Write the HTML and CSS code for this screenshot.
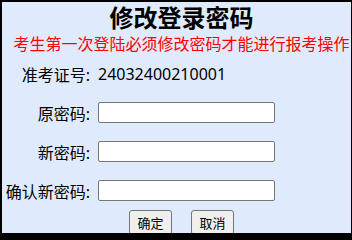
FILE: index.html
```html
<!DOCTYPE html>
<html lang="zh-CN">
<head>
<meta charset="utf-8">
<title>修改登录密码</title>
<link rel="stylesheet" href="styles.css">
</head>
<body>
<div class="frame">
  <div class="content">
    <h1 class="title">修改登录密码</h1>
    <p class="notice">考生第一次登陆必须修改密码才能进行报考操作</p>
    <div class="form">
      <div class="label">准考证号:</div>
      <div class="value">24032400210001</div>
      <div class="label">原密码:</div>
      <div class="value"><input class="field" type="password"></div>
      <div class="label">新密码:</div>
      <div class="value"><input class="field" type="password"></div>
      <div class="label">确认新密码:</div>
      <div class="value"><input class="field" type="password"></div>
    </div>
    <div class="actions">
      <button class="btn" type="button">确定</button>
      <button class="btn" type="button">取消</button>
    </div>
  </div>
</div>
</body>
</html>
```
FILE: styles.css
```css
html, body {
  margin: 0;
  padding: 0;
  background: #000;
}
body {
  font-family: "Noto Sans", "Noto Sans CJK SC", sans-serif;
  color: #000;
}
.frame {
  width: 352px;
  height: 235px;
  box-sizing: border-box;
  border-style: solid;
  border-color: #000;
  border-width: 2px 1px 2px 2px;
  background: #dfebfc;
  overflow: hidden;
}
.content {
  width: 359px;
}
.title {
  margin: 0;
  text-align: center;
  font-size: 24px;
  font-weight: bold;
  line-height: 32px;
}
.notice {
  margin: 0;
  text-align: center;
  color: #ff0000;
  font-size: 16px;
  line-height: 20px;
  white-space: nowrap;
}
.form {
  display: grid;
  grid-template-columns: 88px 1fr;
  grid-auto-rows: 39px;
  column-gap: 8px;
  align-items: center;
  font-size: 16px;
}
.label {
  text-align: right;
  white-space: nowrap;
}
.value {
  display: flex;
  align-items: center;
}
.field {
  width: 177px;
  height: 21px;
  box-sizing: border-box;
  border: 1px solid #767676;
  border-radius: 2px;
  background: #fff;
  padding: 1px 2px;
  margin: 0;
}
.actions {
  display: flex;
  justify-content: center;
  gap: 19px;
}
.btn {
  width: 43px;
  height: 25px;
  box-sizing: border-box;
  border: 1px solid #767676;
  border-radius: 3px;
  background: #efefef;
  font-family: "Noto Sans CJK SC", sans-serif;
  font-size: 13px;
  line-height: 1;
  padding: 0;
  margin: 0;
  color: #000;
}
```
